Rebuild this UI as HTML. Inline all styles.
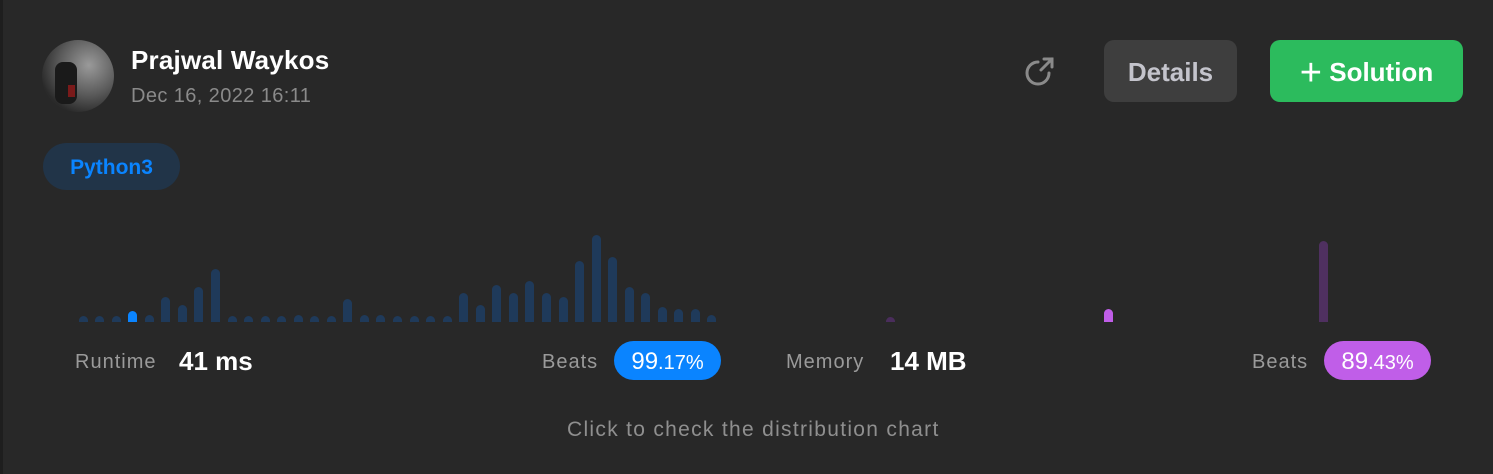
<!DOCTYPE html>
<html><head><meta charset="utf-8"><style>
*{margin:0;padding:0;box-sizing:border-box}
body{width:1493px;height:474px;background:#282828;font-family:"Liberation Sans",sans-serif;position:relative;overflow:hidden}
.a{position:absolute;white-space:nowrap}
.g{font-size:20px;color:#9a9a9a;letter-spacing:1px}
.bar{position:absolute;bottom:152px;width:9px;border-radius:4.5px 4.5px 0 0;background:#1f3a5a}
</style></head><body>
<div class="a" style="left:0;top:0;width:3px;height:474px;background:#1e1e1e"></div>
<div class="a" style="left:42px;top:40px;width:72px;height:72px;border-radius:50%;background:radial-gradient(circle at 65% 35%,#9a9a9a,#5a5a5a 45%,#2a2a2a 75%)"></div>
<div class="a" style="left:55px;top:62px;width:22px;height:42px;border-radius:8px;background:#1a1a1a"></div>
<div class="a" style="left:68px;top:85px;width:7px;height:12px;background:#7a1a1a"></div>
<div class="a" style="left:131px;top:45px;font-size:26px;font-weight:bold;color:#fff;letter-spacing:0.2px">Prajwal Waykos</div>
<div class="a" style="left:131px;top:85px;font-size:20px;color:#8a8a8a;letter-spacing:0.4px">Dec 16, 2022 16:11</div>
<svg class="a" style="left:1022px;top:55px" width="34" height="34" viewBox="0 0 34 34" fill="none" stroke="#8a8a8a" stroke-width="3" stroke-linecap="round"><path d="M27 18a11 11 0 1 1-11-11"/><path d="M19 15L30 4M22 4h8v8"/></svg>
<div class="a" style="left:1104px;top:40px;width:133px;height:62px;border-radius:10px;background:#3e3e3e;color:#c4c4cc;font-size:26px;font-weight:bold;text-align:center;line-height:64px">Details</div>
<div class="a" style="left:1270px;top:40px;width:193px;height:62px;border-radius:10px;background:#2cbb5d;color:#fff;font-size:26px;font-weight:bold;text-align:center;line-height:64px"><span style="font-weight:normal;font-size:38px;vertical-align:-4px">+</span> Solution</div>
<div class="a" style="left:43px;top:143px;width:137px;height:47px;border-radius:24px;background:#213448;color:#0a84ff;font-size:21px;font-weight:bold;text-align:center;line-height:49px">Python3</div>
<div id="bars"></div>
<div class="bar" style="left:886px;height:5px;background:#4a2d5c"></div>
<div class="bar" style="left:1104px;height:13px;background:#c05ee8"></div>
<div class="bar" style="left:1319px;height:81px;background:#4f3060"></div>
<div class="a g" style="left:75px;top:351px">Runtime</div>
<div class="a" style="left:179px;top:346px;font-size:26px;font-weight:bold;color:#fff">41 ms</div>
<div class="a g" style="left:542px;top:351px">Beats</div>
<div class="a" style="left:614px;top:341px;width:107px;height:39px;border-radius:20px;background:#0a84ff;color:#fff;font-size:24px;text-align:center;line-height:41px">99<span style="font-size:20px">.17%</span></div>
<div class="a g" style="left:786px;top:351px">Memory</div>
<div class="a" style="left:890px;top:346px;font-size:26px;font-weight:bold;color:#fff">14 MB</div>
<div class="a g" style="left:1252px;top:351px">Beats</div>
<div class="a" style="left:1324px;top:341px;width:107px;height:39px;border-radius:20px;background:#c05ee8;color:#fff;font-size:24px;text-align:center;line-height:41px">89<span style="font-size:20px">.43%</span></div>
<div class="a" style="left:567px;top:418px;font-size:21px;color:#8f8f8f;letter-spacing:1.3px">Click to check the distribution chart</div>
<script>
var h=[6,6,6,11,7,25,17,35,53,6,6,6,6,7,6,6,23,7,7,6,6,6,6,29,17,37,29,41,29,25,61,87,65,35,29,15,13,13,7];
var s='';for(var i=0;i<h.length;i++){var x=83+i*16.55-4.5;s+='<div class="bar" style="left:'+x.toFixed(1)+'px;height:'+h[i]+'px'+(i==3?';background:#0a84ff':'')+'"></div>';}
document.getElementById('bars').innerHTML=s;
</script>
</body></html>
